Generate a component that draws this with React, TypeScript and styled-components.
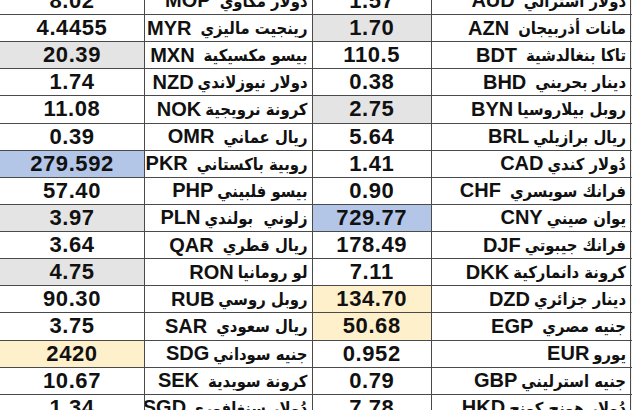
import styled, { createGlobalStyle } from "styled-components";

type Tint = "none" | "grey" | "blue" | "gold";

interface IRate {
  value: string;
  name: string;
  code: string;
  tint?: Tint;
  wide?: boolean;
}

const tints: Record<Tint, string> = {
  none: "#ffffff",
  grey: "#e4e4e4",
  blue: "#b4c6e7",
  gold: "#fff0cc",
};

const left: IRate[] = [
  { value: "8.02", name: "دولار مكاوي", code: "MOP", wide: true },
  { value: "4.4455", name: "رينجيت ماليزي", code: "MYR", wide: true },
  { value: "20.39", name: "بيسو مكسيكية", code: "MXN", tint: "grey", wide: true },
  { value: "1.74", name: "دولار نيوزلاندي", code: "NZD" },
  { value: "11.08", name: "كرونة نرويجية", code: "NOK" },
  { value: "0.39", name: "ريال عماني", code: "OMR", wide: true },
  { value: "279.592", name: "روبية باكستاني", code: "PKR", tint: "blue", wide: true },
  { value: "57.40", name: "بيسو فلبيني", code: "PHP" },
  { value: "3.97", name: "زلوني  بولندي", code: "PLN", tint: "grey" },
  { value: "3.64", name: "ريال قطري", code: "QAR", wide: true },
  { value: "4.75", name: "لو رومانيا", code: "RON", tint: "grey" },
  { value: "90.30", name: "روبل روسي", code: "RUB" },
  { value: "3.75", name: "ريال سعودي", code: "SAR", wide: true },
  { value: "2420", name: "جنيه سوداني", code: "SDG", tint: "gold" },
  { value: "10.67", name: "كرونة سويدية", code: "SEK", wide: true },
  { value: "1.34", name: "دُولار سنغافوري", code: "SGD" },
];

const right: IRate[] = [
  { value: "1.57", name: "دولار استرالي", code: "AUD", wide: true },
  { value: "1.70", name: "مانات أذربيجان", code: "AZN", tint: "grey", wide: true },
  { value: "110.5", name: "تاكا بنغالدشية", code: "BDT", wide: true },
  { value: "0.38", name: "دينار بحريني", code: "BHD", wide: true },
  { value: "2.75", name: "روبل بيلاروسيا", code: "BYN", tint: "grey" },
  { value: "5.64", name: "ريال برازيلي", code: "BRL" },
  { value: "1.41", name: "دُولار كندي", code: "CAD" },
  { value: "0.90", name: "فرانك سويسري", code: "CHF", wide: true },
  { value: "729.77", name: "يوان صيني", code: "CNY", tint: "blue" },
  { value: "178.49", name: "فرانك جيبوتي", code: "DJF" },
  { value: "7.11", name: "كرونة دانماركية", code: "DKK" },
  { value: "134.70", name: "دينار جزائري", code: "DZD", tint: "gold" },
  { value: "50.68", name: "جنيه مصري", code: "EGP", tint: "gold", wide: true },
  { value: "0.952", name: "يورو", code: "EUR" },
  { value: "0.79", name: "جنيه استرليني", code: "GBP" },
  { value: "7.78", name: "دُولار هونج كونج", code: "HKD" },
];

const GlobalStyle = createGlobalStyle`
  html, body {
    margin: 0;
    padding: 0;
    background: #ffffff;
  }
`;

const Page = styled.div`
  width: 632px;
  height: 410px;
  overflow: hidden;
  background: #ffffff;
`;

const Sheet = styled.div`
  display: grid;
  grid-template-columns: 144px 166.5px 118.5px 198px 4px;
  grid-auto-rows: 26.14px;
  gap: 1px;
  margin-top: -12.14px;
  background: #4a4a4a;
  font-family: "Liberation Sans", Arial, "DejaVu Sans", sans-serif;
  color: #111111;
`;

const ValueCell = styled.div<{ $tint: Tint }>`
  display: flex;
  align-items: center;
  justify-content: center;
  background: ${(p) => tints[p.$tint]};
  font-size: 22px;
  font-weight: 700;
  letter-spacing: 0.6px;
`;

const NameCell = styled.div<{ $wide?: boolean }>`
  display: flex;
  align-items: center;
  justify-content: flex-start;
  direction: rtl;
  gap: ${(p) => (p.$wide ? "9px" : "4px")};
  padding-right: 4px;
  background: #ffffff;
  white-space: nowrap;
  overflow: hidden;
`;

const ArabicName = styled.span`
  font-family: "DejaVu Sans Condensed", "DejaVu Sans", sans-serif;
  font-size: 16.5px;
  font-weight: 700;
  white-space: pre;
  padding-top: 1px;
`;

const Code = styled.span`
  font-size: 20px;
  font-weight: 700;
  direction: ltr;
`;

const Edge = styled.div`
  background: #f1f1f1;
`;

function Rate({ rate }: { rate: IRate }) {
  return (
    <>
      <ValueCell $tint={rate.tint ?? "none"}>{rate.value}</ValueCell>
      <NameCell $wide={rate.wide}>
        <ArabicName>{rate.name}</ArabicName>
        <Code>{rate.code}</Code>
      </NameCell>
    </>
  );
}

function Row({ leftRate, rightRate }: { leftRate: IRate; rightRate: IRate }) {
  return (
    <>
      <Rate rate={leftRate} />
      <Rate rate={rightRate} />
      <Edge />
    </>
  );
}

export default function App() {
  return (
    <Page>
      <GlobalStyle />
      <Sheet>
        {left.map((rate, i) => (
          <Row key={rate.code} leftRate={rate} rightRate={right[i]} />
        ))}
      </Sheet>
    </Page>
  );
}
